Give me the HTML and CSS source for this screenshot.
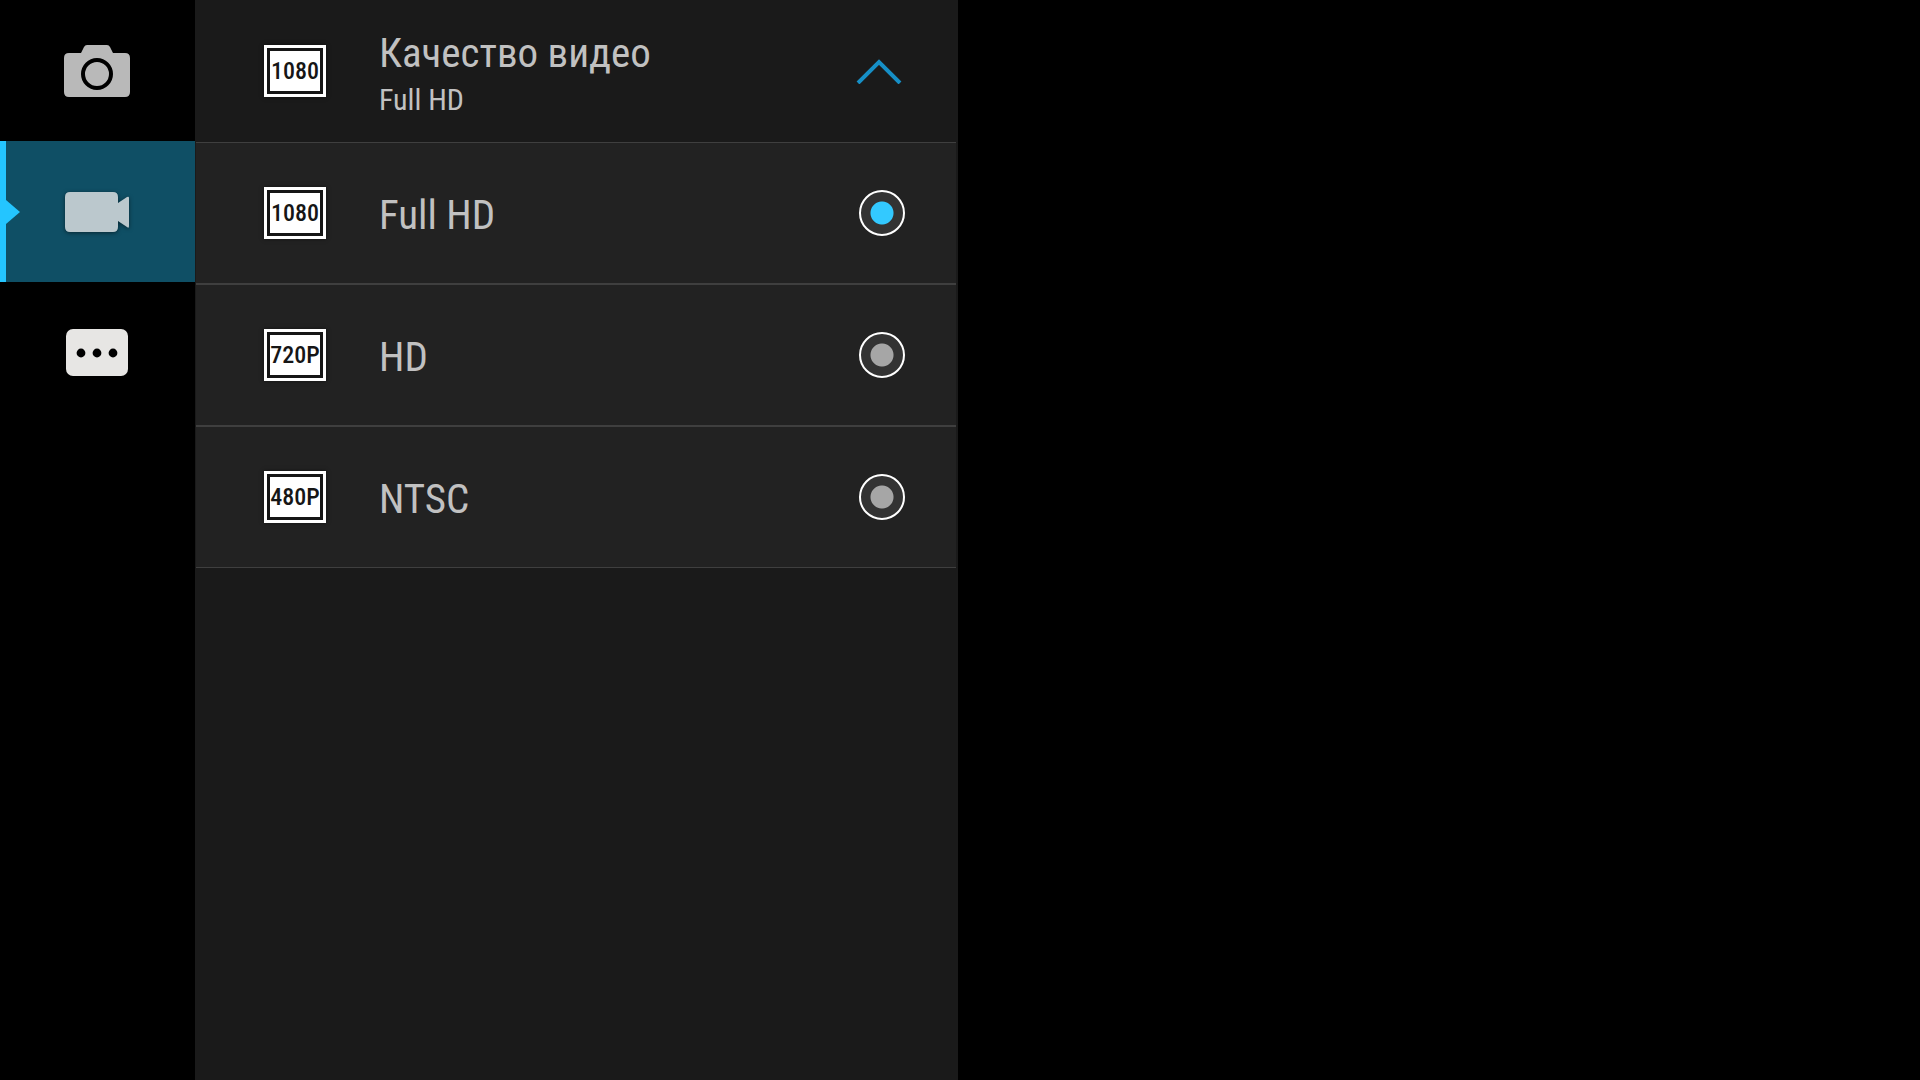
FILE: index.html
```html
<!DOCTYPE html>
<html lang="ru">
<head>
    <meta charset="UTF-8">
    <meta name="viewport" content="width=device-width, initial-scale=1.0">
    <title>Качество видео</title>
    <link rel="stylesheet" href="styles.css">
</head>
<body>

    <nav class="tabs">
        <button class="tab" type="button" aria-label="Фото">
            <svg width="66" height="52" viewBox="0 0 66 52">
                <path fill="#b9b9b9" d="M5 8H17L20 2Q21 0 23 0H43Q45 0 46 2L49 8H61Q66 8 66 13V47Q66 52 61 52H5Q0 52 0 47V13Q0 8 5 8Z"/>
                <circle cx="33" cy="29" r="14" fill="none" stroke="#000" stroke-width="4"/>
            </svg>
        </button>
        <button class="tab active" type="button" aria-label="Видео">
            <svg width="64" height="40" viewBox="0 0 64 40">
                <path fill="#bbc8cd" d="M5 0H48Q53 0 53 5V11L62 5Q64 4 64 6V34Q64 37 62 35L53 29V35Q53 40 48 40H5Q0 40 0 35V5Q0 0 5 0Z"/>
            </svg>
        </button>
        <button class="tab" type="button" aria-label="Ещё">
            <svg width="62" height="47" viewBox="0 0 62 47">
                <rect width="62" height="47" rx="7" fill="#e7e6e4"/>
                <circle cx="15" cy="24" r="4.4"/>
                <circle cx="31" cy="24" r="4.4"/>
                <circle cx="47" cy="24" r="4.4"/>
            </svg>
        </button>
    </nav>

    <main class="panel">
        <button class="header" type="button" aria-expanded="true">
            <span class="badge"><span>1080</span></span>
            <span class="label">
                <span class="title">Качество видео</span>
                <span class="value">Full HD</span>
            </span>
            <svg class="arrow" width="46" height="26" viewBox="0 0 46 26">
                <path d="M2 25L23 4L44 25" fill="none" stroke="#168fc6" stroke-width="4"/>
            </svg>
        </button>
        <div class="options" role="radiogroup" aria-label="Качество видео">
            <label class="option">
                <span class="badge"><span>1080</span></span>
                <span class="label">Full HD</span>
                <input type="radio" name="quality" checked>
            </label>
            <label class="option">
                <span class="badge"><span>720P</span></span>
                <span class="label">HD</span>
                <input type="radio" name="quality">
            </label>
            <label class="option">
                <span class="badge"><span>480P</span></span>
                <span class="label">NTSC</span>
                <input type="radio" name="quality">
            </label>
        </div>
    </main>

</body>
</html>
```
FILE: styles.css
```css
* {
    box-sizing: border-box;
}
body {
    display: grid;
    grid-template-columns: 195px 763fr 962fr;
    min-height: 100vh;
    margin: 0;
    background-color: #000;
    color: #c1c1c1;
    font-family: "Roboto Condensed", "Liberation Sans Narrow", Roboto, sans-serif;
    font-size: 41px;
}
button {
    border: 0;
    background: none;
    color: inherit;
    font: inherit;
    text-align: left;
    cursor: pointer;
}

/* left tabs */
.tab {
    display: flex;
    align-items: center;
    justify-content: center;
    position: relative;
    width: 100%;
    height: 141px;
    padding: 0 2px 0 0;
}
.tab.active {
    background-color: #0f4f65;
    border-left: 6px solid #24c5ff;
    padding-right: 8px;
}
.tab.active::before {
    content: "";
    position: absolute;
    left: 0;
    top: 50%;
    margin-top: -12px;
    border: 12px solid transparent;
    border-left: 14px solid #24c5ff;
    border-right: 0;
}
.tab.active svg {
    filter: drop-shadow(0 1px 2px rgba(0, 0, 0, 0.5));
}

/* settings list */
.panel {
    background-color: #1a1a1a;
    padding: 0 2px 0 1px;
}
.header, .option {
    display: flex;
    align-items: center;
    width: 100%;
    height: 142px;
    padding: 0 51px 0 68px;
    cursor: pointer;
}
.option {
    background-color: #222;
    border-top: 1px solid #3f3f3f;
    border-bottom: 1px solid #3f3f3f;
}
.label {
    flex: 1;
    margin-left: 53px;
    padding-top: 4px;
    line-height: 48px;
}
.header .label {
    padding-top: 10px;
}
.title, .value {
    display: block;
}
.value {
    font-size: 30px;
    line-height: 46px;
}
.arrow {
    margin-right: 3px;
}
.badge {
    width: 62px;
    height: 52px;
    padding: 3px;
    background-color: #fff;
    box-shadow: 0 0 4px rgba(0, 0, 0, 0.5);
}
.badge span {
    display: block;
    height: 46px;
    border: 3px solid #161616;
    color: #161616;
    font-size: 24px;
    font-weight: 500;
    line-height: 40px;
    text-align: center;
}
input[type="radio"] {
    appearance: none;
    width: 46px;
    height: 46px;
    margin: 0;
    border: 2px solid #fff;
    border-radius: 50%;
    background: radial-gradient(circle, #a6a6a6 11px, #333 12px);
    cursor: pointer;
}
input[type="radio"]:checked {
    background: radial-gradient(circle, #33c9ff 11px, #333 12px);
}
```
